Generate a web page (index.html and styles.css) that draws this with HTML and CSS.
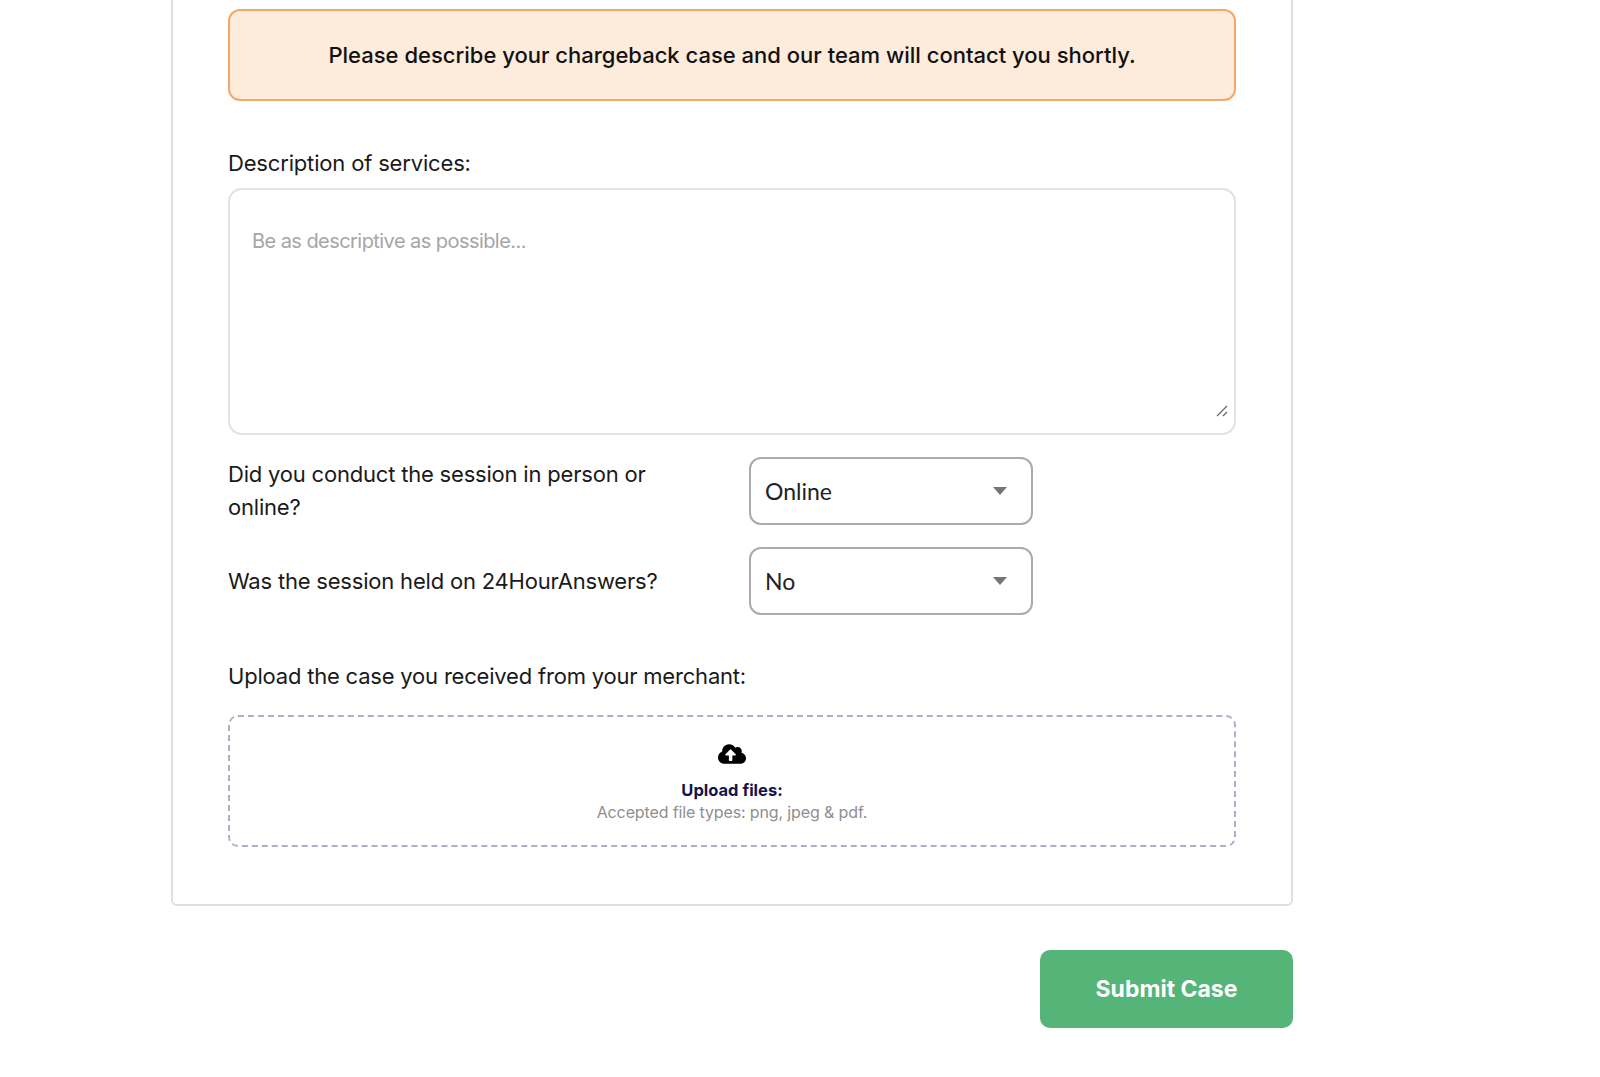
FILE: index.html
```html
<!DOCTYPE html>
<html lang="en">
<head>
  <meta charset="UTF-8" />
  <meta name="viewport" content="width=device-width, initial-scale=1.0"/>
  <title>Submit Chargeback Case</title>
  <link rel="stylesheet" href="styles.css">
</head>
<body>
  <div class="container">
    <form class="card">
      <div class="notice">Please describe your chargeback case and our team will contact you shortly.</div>

      <label class="field-label" for="description">Description of services:</label>
      <div class="description-wrap">
        <textarea id="description" class="description" placeholder="Be as descriptive as possible..."></textarea>
        <svg class="resize-grip" viewBox="0 0 12 12" aria-hidden="true">
          <path d="M1 11 11 1M7 11l4-4"/>
        </svg>
      </div>

      <div class="question first">
        <label for="sessionType">Did you conduct the session in person or online?</label>
        <div class="select-wrap">
          <select id="sessionType">
            <option>Online</option>
            <option>In person</option>
          </select>
        </div>
      </div>

      <div class="question">
        <label for="heldOn">Was the session held on 24HourAnswers?</label>
        <div class="select-wrap">
          <select id="heldOn">
            <option>No</option>
            <option>Yes</option>
          </select>
        </div>
      </div>

      <div class="field-label upload-label">Upload the case you received from your merchant:</div>
      <div class="dropzone">
        <svg class="upload-icon" viewBox="0 0 640 512" aria-hidden="true">
          <path d="M537.6 226.6c4.1-10.7 6.4-22.4 6.4-34.6 0-53-43-96-96-96-19.7 0-38.1 6-53.3 16.2C367 64.2 315.3 32 256 32c-88.4 0-160 71.6-160 160 0 2.7.1 5.4.2 8.1C40.2 219.8 0 273.2 0 336c0 79.5 64.5 144 144 144h368c70.7 0 128-57.3 128-128 0-61.9-44-113.6-102.4-125.4zM393.4 288H328v112c0 8.8-7.2 16-16 16h-48c-8.8 0-16-7.2-16-16V288h-65.4c-14.3 0-21.4-17.2-11.3-27.3l105.4-105.4c6.2-6.2 16.4-6.2 22.6 0l105.4 105.4c10.1 10.1 2.9 27.3-11.3 27.3z"/>
        </svg>
        <div class="upload-title">Upload files:</div>
        <div class="upload-hint">Accepted file types: png, jpeg &amp; pdf.</div>
      </div>
    </form>

    <div class="actions">
      <button type="button" class="submit-btn">Submit Case</button>
    </div>
  </div>
</body>
</html>
```

FILE: styles.css
```css
html, body {
  height: 100%;
  overflow: hidden;
}

body {
  font-family: Inter, "Open Sans", sans-serif;
  background-color: white;
  color: #1a1a1a;
  margin: 0;
}

.container {
  width: 1122px;
  margin-left: 171px;
}

.card {
  box-sizing: border-box;
  height: 906px;
  padding: 9px 55px 0;
  background-color: white;
  border: 2px solid #e0e0e0;
  border-top: none;
  border-radius: 0 0 6px 6px;
}

.notice {
  box-sizing: border-box;
  height: 92px;
  display: flex;
  align-items: center;
  justify-content: center;
  background-color: #fdebdc;
  border: 2px solid #f6a869;
  border-radius: 12px;
  font-size: 22px;
  font-weight: 500;
  color: #111;
}

.field-label {
  display: block;
  margin-top: 46px;
  font-size: 22px;
  line-height: 33px;
  letter-spacing: -0.17px;
}

.description-wrap {
  position: relative;
  margin-top: 8px;
}

.description {
  display: block;
  box-sizing: border-box;
  width: 100%;
  height: 247px;
  padding: 39px 22px 0;
  border: 2px solid #dfe2e8;
  border-radius: 14px;
  font-family: inherit;
  font-size: 20px;
  letter-spacing: -0.56px;
  outline: none;
  resize: none;
}

.description::placeholder {
  color: #a6a6a6;
}

.resize-grip {
  position: absolute;
  right: 8px;
  bottom: 18px;
  width: 12px;
  height: 12px;
  fill: none;
  stroke: #666;
  stroke-width: 1.2;
}

.question {
  display: flex;
  align-items: center;
  margin-top: 22px;
  font-size: 22px;
  line-height: 33px;
  letter-spacing: -0.2px;
}

.question label {
  width: 470px;
  margin-right: 51px;
}

.select-wrap {
  position: relative;
  width: 284px;
}

.select-wrap::after {
  content: "";
  position: absolute;
  top: 30px;
  right: 26px;
  border-left: 7.5px solid transparent;
  border-right: 7.5px solid transparent;
  border-top: 8px solid #757575;
}

.select-wrap select {
  display: block;
  width: 100%;
  height: 68px;
  padding: 0 14px;
  appearance: none;
  background-color: white;
  border: 2px solid #ababab;
  border-radius: 12px;
  font-family: Lato, sans-serif;
  font-size: 23px;
  color: #222;
}

.upload-label {
  margin-top: 45px;
  letter-spacing: -0.2px;
}

.dropzone {
  box-sizing: border-box;
  height: 132px;
  margin-top: 22px;
  padding-top: 23px;
  border: 2px dashed #b0adc6;
  border-radius: 10px;
  text-align: center;
}

.upload-icon {
  display: block;
  width: 28px;
  height: 28px;
  margin: 0 auto;
}

.upload-title {
  margin-top: 11px;
  font-size: 16.5px;
  line-height: 22px;
  font-weight: 700;
  color: #14144a;
}

.upload-hint {
  font-size: 16px;
  line-height: 22px;
  letter-spacing: -0.13px;
  color: #8f8f8f;
}

.actions {
  display: flex;
  justify-content: flex-end;
  margin-top: 44px;
}

.submit-btn {
  width: 253px;
  height: 78px;
  background-color: #55b478;
  color: white;
  font-family: inherit;
  font-size: 23px;
  font-weight: 700;
  border: none;
  border-radius: 10px;
  cursor: pointer;
}
```
